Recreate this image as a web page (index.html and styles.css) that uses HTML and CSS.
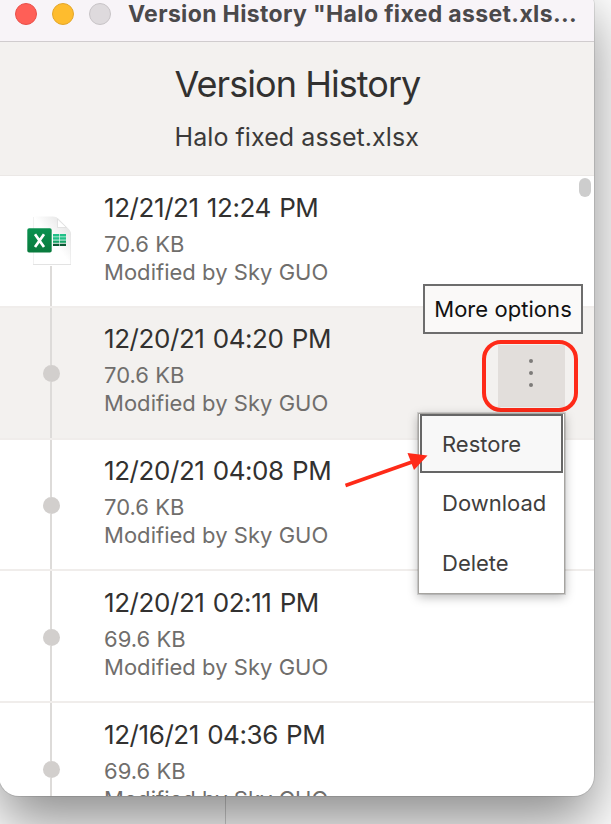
FILE: index.html
```html
<!DOCTYPE html>
<html lang="en">
<head>
    <meta charset="UTF-8">
    <meta name="viewport" content="width=device-width, initial-scale=1.0">
    <title>Version History</title>
    <link rel="stylesheet" href="styles.css">
</head>
<body>

    <div class="divider"></div>

    <div class="window">
        <div class="titlebar">
            <span class="light close"></span>
            <span class="light minimize"></span>
            <span class="light disabled"></span>
            <span class="window-title">Version History "Halo fixed asset.xls...</span>
        </div>

        <div class="header">
            <div class="header-text">
                <h1>Version History</h1>
                <p>Halo fixed asset.xlsx</p>
            </div>
        </div>

        <div class="versions">
            <div class="scroll-thumb"></div>

            <div class="version">
                <div class="timeline">
                    <svg class="file-icon" width="50" height="52" viewBox="0 0 50 52">
                        <defs>
                            <linearGradient id="fold" x1="0" y1="1" x2="1" y2="0">
                                <stop offset="0.5" stop-color="#fff"/>
                                <stop offset="1" stop-color="#ddd"/>
                            </linearGradient>
                            <linearGradient id="green" x1="0" y1="0" x2="0" y2="1">
                                <stop offset="0" stop-color="#0a9150"/>
                                <stop offset="1" stop-color="#087a3c"/>
                            </linearGradient>
                        </defs>
                        <path d="M7 3h20.500q3 0 5 2l10.500 10.500q2 2 2 5V51H7z" fill="#e3e3e3"/>
                        <path d="M7.500 2.500H27q3 0 5 2L42.500 15q2 2 2 5V50h-37z" fill="url(#fold)"/>
                        <path d="M31.500 5v8.500h9z" fill="#fff" stroke="#dcdcdc" stroke-width="0.800"/>
                        <path d="M27 20H40V23H27z" fill="#21c087"/>
                        <path d="M27 23H40v3.500H27z" fill="#21c087"/>
                        <path d="M27 26.500H40V29H27z" fill="#17a568"/>
                        <path d="M27 29.500H40V32H27z" fill="#0b5a34"/>
                        <path d="M27 22.800H40M27 26H40M27 29.200H40M33.500 20V32" stroke="#fff" stroke-width="0.600"/>
                        <rect x="1.300" y="14.300" width="24.400" height="24.200" rx="1.800" fill="url(#green)"/>
                        <path d="M9 20.200l9 12.800M18 20.200l-9 12.800" stroke="#fff" stroke-width="2.700"/>
                    </svg>
                    <span class="line rest"></span>
                </div>
                <div class="details">
                    <div class="date">12/21/21 12:24 PM</div>
                    <div class="meta">70.6 KB</div>
                    <div class="meta">Modified by Sky GUO</div>
                </div>
            </div>

            <div class="version active">
                <div class="timeline">
                    <span class="line"></span>
                    <span class="dot"></span>
                    <span class="line rest"></span>
                </div>
                <div class="details">
                    <div class="date">12/20/21 04:20 PM</div>
                    <div class="meta">70.6 KB</div>
                    <div class="meta">Modified by Sky GUO</div>
                </div>
                <button class="more" type="button" aria-label="More options">
                    <span></span>
                    <span></span>
                    <span></span>
                </button>
                <div class="tooltip">More options</div>
                <div class="highlight"></div>
                <div class="menu">
                    <div class="menu-item focused">Restore</div>
                    <div class="menu-item">Download</div>
                    <div class="menu-item">Delete</div>
                </div>
                <svg class="arrow" width="86" height="40" viewBox="0 0 86 40">
                    <path d="M1.500 35.500L68 12" stroke="#fe2a18" stroke-width="3.600"/>
                    <path d="M63.500 3L83.500 5.500 70 20z" fill="#fe2a18"/>
                </svg>
            </div>

            <div class="version">
                <div class="timeline">
                    <span class="line"></span>
                    <span class="dot"></span>
                    <span class="line rest"></span>
                </div>
                <div class="details">
                    <div class="date">12/20/21 04:08 PM</div>
                    <div class="meta">70.6 KB</div>
                    <div class="meta">Modified by Sky GUO</div>
                </div>
            </div>

            <div class="version">
                <div class="timeline">
                    <span class="line"></span>
                    <span class="dot"></span>
                    <span class="line rest"></span>
                </div>
                <div class="details">
                    <div class="date">12/20/21 02:11 PM</div>
                    <div class="meta">69.6 KB</div>
                    <div class="meta">Modified by Sky GUO</div>
                </div>
            </div>

            <div class="version">
                <div class="timeline">
                    <span class="line"></span>
                    <span class="dot"></span>
                    <span class="line rest"></span>
                </div>
                <div class="details">
                    <div class="date">12/16/21 04:36 PM</div>
                    <div class="meta">69.6 KB</div>
                    <div class="meta">Modified by Sky GUO</div>
                </div>
            </div>
        </div>
    </div>

</body>
</html>
```
FILE: styles.css
```css
* {
    box-sizing: border-box;
}

body {
    font-family: Inter, "Liberation Sans", sans-serif;
    background: #fff;
    margin: 0;
    height: 824px;
    overflow: hidden;
    display: flow-root;
}

.window {
    position: relative;
    width: 595px;
    height: 810px;
    margin-top: -14px;
    margin-left: -1px;
    border-radius: 20px;
    background: #fff;
    overflow: hidden;
    box-shadow: 0 0 0 1px rgba(0, 0, 0, 0.1), 0 26px 56px rgba(0, 0, 0, 0.45);
}

/* faint line of the window behind, below the bottom edge */
.divider {
    position: absolute;
    left: 225px;
    top: 796px;
    width: 1px;
    height: 28px;
    background: rgba(0, 0, 0, 0.18);
    z-index: 1;
}

.titlebar {
    display: flex;
    align-items: center;
    height: 56px;
    padding: 1px 0 0 16px;
    background: #f8f4f8;
    border-bottom: 1px solid #d0ccce;
}

.light {
    width: 22px;
    height: 22px;
    margin-right: 15px;
    border-radius: 50%;
    flex: none;
}

.close {
    background: #ff5f57;
    border: 1px solid #e9504a;
}

.minimize {
    background: #febc2e;
    border: 1px solid #e3a62b;
}

.disabled {
    background: #dedadd;
    border: 1px solid #c8c4c7;
    margin-right: 17px;
}

.window-title {
    font-size: 23px;
    font-weight: 700;
    letter-spacing: 0.35px;
    color: #4b494b;
    white-space: nowrap;
}

.header {
    display: flex;
    justify-content: center;
    height: 134px;
    padding-top: 20px;
    background: #f3f1ef;
    border-bottom: 1px solid #ebe8e6;
}

.header-text {
    width: 244px;
    white-space: nowrap;
}

h1 {
    margin: 0;
    font-size: 36px;
    font-weight: 400;
    line-height: 44px;
    letter-spacing: -0.95px;
    color: #323130;
}

.header p {
    margin: 14px 0 0;
    font-size: 25px;
    line-height: 34px;
    letter-spacing: 0.07px;
    color: #3b3a39;
}

.versions {
    position: relative;
}

.scroll-thumb {
    position: absolute;
    right: 3px;
    top: 2px;
    width: 12px;
    height: 19px;
    border-radius: 6px;
    background: #cdcdcd;
}

.version {
    position: relative;
    display: flex;
    height: 131.8px;
    border-bottom: 2px solid #f0edeb;
}

.active {
    background: #f3f1ef;
    z-index: 1;
}

.timeline {
    display: flex;
    flex-direction: column;
    align-items: center;
    width: 104px;
    flex: none;
}

.file-icon {
    margin-top: 38px;
    flex: none;
}

.line {
    width: 2px;
    height: 57.5px;
    background: #dddbd9;
}

.rest {
    flex: 1;
}

.dot {
    width: 17px;
    height: 17px;
    border-radius: 50%;
    background: #d2cfcd;
}

.details {
    padding: 13.5px 0 0 1px;
    white-space: nowrap;
}

.date {
    font-size: 26px;
    line-height: 36px;
    margin-bottom: 4px;
    letter-spacing: -0.42px;
    word-spacing: 1.3px;
    color: #323130;
}

.meta {
    font-size: 22px;
    line-height: 28px;
    letter-spacing: 0.03px;
    color: #706e6c;
}

.more {
    display: flex;
    flex-direction: column;
    align-items: center;
    gap: 8px;
    width: 67px;
    height: 62px;
    margin: 37px 29px 0 auto;
    padding: 14px 1px 0 0;
    border: none;
    background: #e2dedb;
}

.more span {
    width: 4px;
    height: 4px;
    border-radius: 50%;
    background: #7d7b79;
}

.tooltip {
    position: absolute;
    left: 424px;
    top: -24px;
    width: 160px;
    height: 50px;
    border: 2px solid #6d6d6d;
    background: #faf9f8;
    color: #111;
    font-size: 22px;
    line-height: 46px;
    letter-spacing: 0.05px;
    text-align: center;
    white-space: nowrap;
}

.highlight {
    position: absolute;
    left: 483px;
    top: 32px;
    width: 96px;
    height: 72px;
    border: 4px solid #fe2a18;
    border-radius: 19px;
}

.menu {
    position: absolute;
    left: 419px;
    top: 105px;
    width: 147px;
    height: 181px;
    padding: 0 1px;
    background: #fff;
    border: 1px solid #a6a4a0;
    box-shadow: 0 0 0 1px rgba(0, 0, 0, 0.12), 0 3px 10px rgba(0, 0, 0, 0.28);
}

.menu-item {
    height: 59.5px;
    padding-left: 22px;
    font-size: 22px;
    line-height: 60px;
    color: #3f3e3d;
}

.focused {
    width: 143px;
    border: 2px solid #666;
    padding-left: 20px;
    line-height: 56px;
    background: #f8f8f8;
}

.arrow {
    position: absolute;
    left: 345px;
    top: 142px;
}
```
